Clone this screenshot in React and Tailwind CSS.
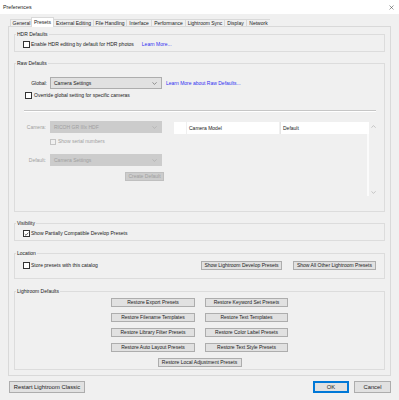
import React from 'react';

const Check = ({ checked, disabled, className = '' }) => (
  <span
    className={`flex h-[7px] w-[7px] shrink-0 items-center justify-center border ${
      disabled ? 'border-[#c4c4c4] bg-[#f0f0f0]' : 'border-[#333333] bg-white'
    } ${className}`}
  >
    {checked && (
      <svg viewBox="0 0 10 10" className="h-[6px] w-[6px]">
        <path d="M1.5 5.2 L4 7.6 L8.6 2.4" fill="none" stroke="#222" strokeWidth="1.4" />
      </svg>
    )}
  </span>
);

const Btn = ({ children, className = '', disabled }) => (
  <div
    className={`flex items-center justify-center border ${
      disabled ? 'border-[#bfbfbf] bg-[#cccccc] text-[#a0a0a0]' : 'border-[#adadad] bg-[#e1e1e1] text-[#1a1a1a]'
    } ${className}`}
  >
    {children}
  </div>
);

const Chevron = ({ color = '#555' }) => (
  <svg viewBox="0 0 8 5" className="h-[3px] w-[5px]">
    <path d="M0.5 0.5 L4 4 L7.5 0.5" fill="none" stroke={color} strokeWidth="1" />
  </svg>
);

const Select = ({ value, disabled }) => (
  <div
    className={`flex h-[12px] w-[112px] items-center justify-between border pl-[3px] pr-[4px] ${
      disabled ? 'border-[#cccccc] bg-[#cccccc] text-[#a0a0a0]' : 'border-[#adadad] bg-[#e1e1e1] text-[#1a1a1a]'
    }`}
  >
    <span>{value}</span>
    <Chevron color={disabled ? '#a8a8a8' : '#555'} />
  </div>
);

const Group = ({ label, className = '', children }) => (
  <div className={`border border-[#dcdcdc] ${className}`}>
    <div className="-mt-[4px] ml-[1px] w-fit bg-[#f0f0f0] px-[1px] leading-[7px] text-[#1a1a1a]">{label}</div>
    {children}
  </div>
);

const tabs = ['General', 'Presets', 'External Editing', 'File Handling', 'Interface', 'Performance', 'Lightroom Sync', 'Display', 'Network'];
const tabWidths = ['w-[22px]', 'w-[23px]', 'w-[40px]', 'w-[33px]', 'w-[25px]', 'w-[34px]', 'w-[39px]', 'w-[22px]', 'w-[24px]'];

const App = () => {
  return (
    <div className="h-[400px] w-[399px] overflow-hidden bg-[#f0f0f0] text-[5px] leading-[7px] text-[#1a1a1a] [font-family:'Liberation_Sans',Arial,sans-serif]">
      {/* Title bar */}
      <div className="flex h-[14px] items-center justify-between bg-white pl-[3px] pr-[5px]">
        <span className="text-[5.3px]">Preferences</span>
        <svg viewBox="0 0 10 10" className="h-[5px] w-[5px]">
          <path d="M1 1 L9 9 M9 1 L1 9" stroke="#333" strokeWidth="1" />
        </svg>
      </div>

      <div className="px-[8px]">
        {/* Tabs */}
        <div className="flex h-[12px] items-end pl-[2px]">
          {tabs.map((t, i) =>
            t === 'Presets' ? (
              <div
                key={t}
                className={`relative z-10 -mb-px -ml-px -mr-px flex h-[10px] items-center justify-center border border-b-0 border-[#d9d9d9] bg-white ${tabWidths[i]}`}
              >
                {t}
              </div>
            ) : (
              <div
                key={t}
                className={`flex h-[7px] items-center justify-center border border-b-0 border-r-0 border-[#d9d9d9] bg-[#f0f0f0] ${tabWidths[i]} ${
                  i === tabs.length - 1 ? 'border-r' : ''
                }`}
              >
                {t}
              </div>
            )
          )}
        </div>

        {/* Panel */}
        <div className="h-[350px] border border-[#d9d9d9] bg-[#f0f0f0] px-[5px] pt-[7px]">
          <Group label="HDR Defaults" className="h-[18px]">
            <div className="mt-[3px] flex items-center pl-[8px]">
              <Check />
              <span className="ml-[1px]">Enable HDR editing by default for HDR photos</span>
              <span className="ml-[8px] text-[#2f2ff0]">Learn More...</span>
            </div>
          </Group>

          <Group label="Raw Defaults" className="mt-[11px] h-[149px]">
            <div className="mt-[10px] flex items-center">
              <span className="w-[32px] text-right">Global:</span>
              <div className="ml-[3px]">
                <Select value="Camera Settings" />
              </div>
              <span className="ml-[4px] text-[#2f2ff0]">Learn More about Raw Defaults...</span>
            </div>
            <div className="mt-[3px] flex items-center pl-[10px]">
              <Check />
              <span className="ml-[2px]">Override global setting for specific cameras</span>
            </div>
            <div className="ml-[9px] mr-[8px] mt-[11px] border-t border-b border-t-[#c6c6c6] border-b-white" />

            <div className="flex items-start">
              <div className="w-[159px] text-[#a0a0a0]">
                <div className="mt-[9px] flex items-center">
                  <span className="w-[31px] text-right">Camera:</span>
                  <div className="ml-[4px]">
                    <Select value="RICOH GR IIIx HDF" disabled />
                  </div>
                </div>
                <div className="ml-[35px] mt-[5px] flex items-center">
                  <Check disabled className="!h-[6px] !w-[6px]" />
                  <span className="ml-[2px]">Show serial numbers</span>
                </div>
                <div className="mt-[9px] flex items-center">
                  <span className="w-[31px] text-right">Default:</span>
                  <div className="ml-[4px]">
                    <Select value="Camera Settings" disabled />
                  </div>
                </div>
                <Btn disabled className="ml-[110px] mt-[6px] h-[9px] w-[39px]">
                  Create Default
                </Btn>
              </div>

              <div className="mt-[10px] flex">
                <div className="w-[195px]">
                  <div className="flex h-[12px] gap-px">
                    <div className="w-[12px] bg-white" />
                    <div className="flex w-[92px] items-center bg-white pl-[2px]">Camera Model</div>
                    <div className="flex flex-1 items-center border-l border-[#e5e5e5] bg-white pl-[2px]">Default</div>
                  </div>
                  <div className="flex h-[62px] justify-end">
                    <div className="w-[2px] bg-[#fbfbfb]" />
                  </div>
                </div>
                <div className="flex h-[74px] w-[8px] flex-col items-center justify-between pb-[2px] pt-[3px]">
                  <svg viewBox="0 0 8 5" className="h-[3px] w-[5px]">
                    <path d="M0.5 4.5 L4 1 L7.5 4.5" fill="none" stroke="#a8a8a8" strokeWidth="1" />
                  </svg>
                  <Chevron color="#a8a8a8" />
                </div>
              </div>
            </div>
          </Group>

          <Group label="Visibility" className="mt-[11px] h-[18px]">
            <div className="mt-[3px] flex items-center pl-[8px]">
              <Check checked />
              <span className="ml-[1px]">Show Partially Compatible Develop Presets</span>
            </div>
          </Group>

          <Group label="Location" className="mt-[12px] h-[26px]">
            <div className="mt-[4px] flex h-[9px] items-center pl-[8px] pr-[8px]">
              <Check />
              <span className="ml-[1px]">Store presets with this catalog</span>
              <div className="ml-auto flex gap-[11px]">
                <Btn className="h-[9px] w-[81px]">Show Lightroom Develop Presets</Btn>
                <Btn className="h-[9px] w-[83px]">Show All Other Lightroom Presets</Btn>
              </div>
            </div>
          </Group>

          <Group label="Lightroom Defaults" className="mt-[12px] h-[79px]">
            <div className="ml-[96px] mt-[3px] flex w-[177px] flex-col items-center gap-[6px]">
              <div className="grid grid-cols-[84px_83px] gap-x-[10px] gap-y-[6px]">
                <Btn className="h-[9px]">Restore Export Presets</Btn>
                <Btn className="h-[9px]">Restore Keyword Set Presets</Btn>
                <Btn className="h-[9px]">Restore Filename Templates</Btn>
                <Btn className="h-[9px]">Restore Text Templates</Btn>
                <Btn className="h-[9px]">Restore Library Filter Presets</Btn>
                <Btn className="h-[9px]">Restore Color Label Presets</Btn>
                <Btn className="h-[9px]">Restore Auto Layout Presets</Btn>
                <Btn className="h-[9px]">Restore Text Style Presets</Btn>
              </div>
              <Btn className="h-[9px] w-[84px]">Restore Local Adjustment Presets</Btn>
            </div>
          </Group>
        </div>
      </div>

      {/* Bottom buttons */}
      <div className="mt-[5px] flex items-center pl-[9px] pr-[8px] text-[5.8px]">
        <Btn className="h-[12px] w-[76px]">Restart Lightroom Classic</Btn>
        <div className="ml-auto flex gap-[5px]">
          <Btn className="h-[12px] w-[36px] !border-[#0078d7] outline outline-1 -outline-offset-2 outline-[#0078d7]">OK</Btn>
          <Btn className="h-[12px] w-[37px]">Cancel</Btn>
        </div>
      </div>
    </div>
  );
};

export default App;
